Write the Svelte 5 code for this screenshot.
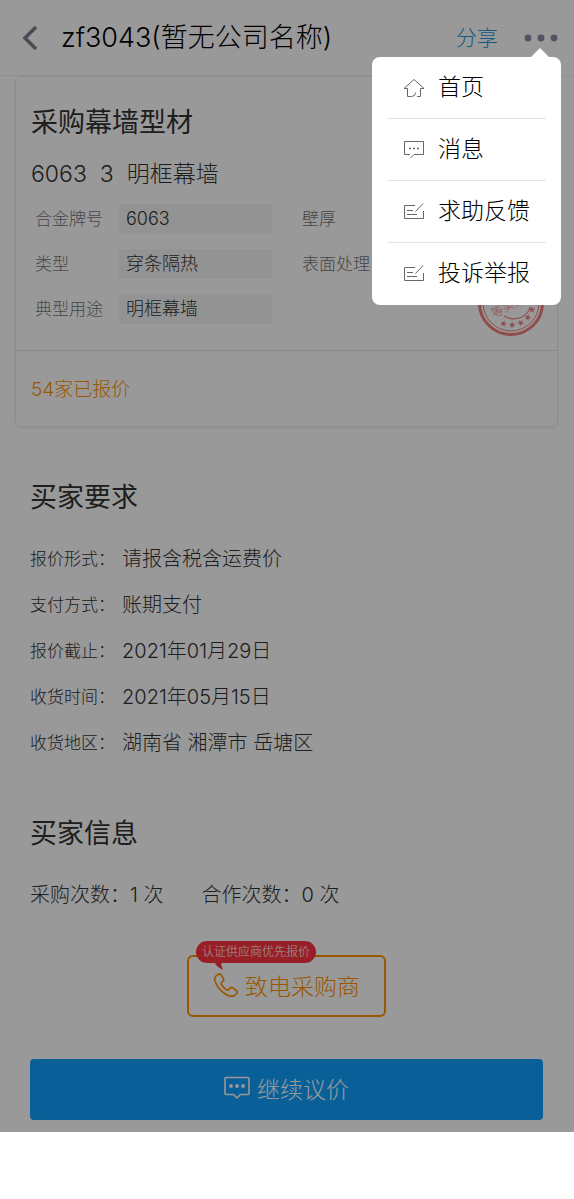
<script lang="ts">
  type Icon = 'home' | 'message' | 'edit';

  const menuItems: { label: string; icon: Icon }[] = [
    { label: '首页', icon: 'home' },
    { label: '消息', icon: 'message' },
    { label: '求助反馈', icon: 'edit' },
    { label: '投诉举报', icon: 'edit' }
  ];

  const specs = [
    { label: '合金牌号', value: '6063' },
    { label: '壁厚', value: '3' },
    { label: '类型', value: '穿条隔热' },
    { label: '表面处理', value: '' },
    { label: '典型用途', value: '明框幕墙' }
  ];

  const requirements = [
    { label: '报价形式：', value: '请报含税含运费价' },
    { label: '支付方式：', value: '账期支付' },
    { label: '报价截止：', value: '2021年01月29日' },
    { label: '收货时间：', value: '2021年05月15日' },
    { label: '收货地区：', value: '湖南省 湘潭市 岳塘区' }
  ];

  const stars = [-20, 3, 26, 49, 72];

  let menuOpen = $state(true);
</script>

<div class="page">
  <header class="topbar">
    <button class="icon-btn back" aria-label="返回">
      <svg viewBox="0 0 16 26" width="16" height="26" fill="none" stroke="#7e7e8c" stroke-width="3.6"><path d="M14 2 3 13l11 11" /></svg>
    </button>
    <h1>zf3043(暂无公司名称)</h1>
    <a class="share" href="#share">分享</a>
    <button class="icon-btn more" aria-label="更多" onclick={() => (menuOpen = !menuOpen)}>
      <svg viewBox="0 0 34 8" width="34" height="8" fill="#8d8aa6"><circle cx="4" cy="4" r="3.4" /><circle cx="17" cy="4" r="3.4" /><circle cx="30" cy="4" r="3.4" /></svg>
    </button>
  </header>

  <main>
    <section class="card">
      <div class="card-body">
        <h2>采购幕墙型材</h2>
        <div class="summary"><span>6063</span><span>3</span><span>明框幕墙</span></div>
        <dl class="specs">
          {#each specs as s}
            <div class="spec">
              <dt>{s.label}</dt>
              <dd>{s.value}</dd>
            </div>
          {/each}
        </dl>
        <svg class="stamp" viewBox="0 0 68 68" width="68" height="68" fill="none" stroke="#f07f7d">
          <circle cx="34" cy="34" r="31.5" stroke-width="3" />
          <circle cx="34" cy="34" r="28" stroke-width="1" />
          <path d="M27 47q9 5 18 1 7-4 8-10" stroke-width="1.2" />
          <text x="17" y="49" font-size="12" fill="#f07f7d" stroke="none" transform="rotate(-27 17 49)">等实力</text>
          {#each stars as a}
            <path transform="rotate({-a} 34 34) translate(34 56)" d="M0-3.400.9-1.100H3.300L1.400.4 2.100 2.900 0 1.500-2.100 2.900-1.400.4-3.300-1.100h2.400z" fill="#f07f7d" stroke="none" />
          {/each}
        </svg>
      </div>
      <a class="quotes" href="#quotes">54家已报价</a>
    </section>

    <section class="block">
      <h2>买家要求</h2>
      <dl class="reqs">
        {#each requirements as r}
          <div class="req">
            <dt>{r.label}</dt>
            <dd>{r.value}</dd>
          </div>
        {/each}
      </dl>
    </section>

    <section class="block buyer">
      <h2>买家信息</h2>
      <p class="counts"><span>采购次数：1 次</span><span>合作次数：0 次</span></p>
    </section>

    <div class="actions">
      <button class="call">
        <span class="tip">认证供应商优先报价
          <svg viewBox="0 0 9 9" width="9" height="9" fill="#ff3542"><path d="M0 0h7q0 5 2 9Q2 6 0 0z" /></svg>
        </span>
        <svg viewBox="0 0 26 26" width="26" height="26" fill="none" stroke="currentColor" stroke-width="1.600" stroke-linejoin="round"><path d="M5 2.500 2.800 4.200C1 6 1.600 9 3.200 12c2.400 4.500 5.800 8.200 10.300 10.700 3 1.700 6 2.200 8 .8l2.300-2c.9-.9.8-1.900-.1-2.700l-3.900-2.900c-1-.7-1.900-.6-2.700.2l-1.400 1.500c-.7.7-1.500.6-2.300.1-2-1.400-3.700-3.100-4.900-5.200-.5-.8-.4-1.500.3-2.200l1.300-1.300c.8-.8.8-1.600.2-2.500L8 2.800C7.200 1.700 6 1.600 5 2.500z" /></svg>
        致电采购商
      </button>
      <button class="bargain">
        <svg viewBox="0 0 26 24" width="26" height="24" fill="none" stroke="currentColor" stroke-width="1.600" stroke-linejoin="round"><path d="M2 1.500h22q1 0 1 1v15q0 1-1 1h-7.500L13 22l-3.500-3.500H2q-1 0-1-1v-15q0-1 1-1z" /><g fill="currentColor" stroke="none"><circle cx="7" cy="10" r="1.900" /><circle cx="13" cy="10" r="1.900" /><circle cx="19" cy="10" r="1.900" /></g></svg>
        继续议价
      </button>
    </div>
  </main>

  {#if menuOpen}
    <div class="mask"></div>
    <nav class="menu">
      {#each menuItems as m}
        <button class="menu-item">
          <svg viewBox="0 0 22 22" width="22" height="22" fill="none" stroke="#666" stroke-width="1">
            {#if m.icon === 'home'}
              <path d="M8.500 19.500h-4v-8h-3.500L11 2.500l10 9h-3.500v8H14M8.500 19.500q4 0 4-4" />
            {:else if m.icon === 'message'}
              <path d="M7 15.500H1.500v-13h19v13H11l-3.500 3.500" />
              <path d="M6 9.500h2m2 0h2m2 0h2" stroke-width="1.500" />
            {:else}
              <path d="M12 4.500H1.500v13h19V10M4 9.500h6M4 13.500h10M20 2.500l-7.500 8" />
            {/if}
          </svg>
          <span>{m.label}</span>
        </button>
      {/each}
    </nav>
  {/if}
</div>

<style>
  :global(body) { background: #fff; }
  .page {
    position: relative;
    background: #fff;
    font-family: Inter, "Noto Sans CJK SC", sans-serif;
    font-weight: 300;
    color: #333;
  }
  h1, h2, p, dl, dd { margin: 0; font-weight: 300; }
  button { font: inherit; cursor: pointer; }
  a { text-decoration: none; }
  svg { display: block; flex: none; }

  .topbar { display: flex; align-items: center; height: 75px; padding: 0 16px 0 22px; border-bottom: 1px solid #f0f0f0; }
  .topbar h1 { flex: 1; margin-left: 23px; font-size: 27px; line-height: 38px; color: #000; }
  .icon-btn { padding: 0; border: none; background: none; }
  .share { font-size: 21px; line-height: 30px; color: #2a93d8; margin-right: 26px; }

  .card { margin: 0 16px 0 15px; border: 1px solid #ededed; border-radius: 6px; box-shadow: 0 1px 2px #eee; }
  .card-body { position: relative; padding: 26px 15px; border-bottom: 1px solid #e4e4e4; }
  h2 { font-size: 27px; line-height: 40px; font-weight: 400; color: #333; }
  .summary { display: flex; gap: 13px; margin-top: 14px; font-size: 23px; line-height: 34px; }
  .specs { display: grid; grid-template-columns: 267px 1fr; row-gap: 15px; margin: 13px 0 0 4px; }
  .spec { display: flex; align-items: center; }
  .spec dt { width: 84px; font-size: 17px; line-height: 30px; color: #777; }
  .spec dd { width: 146px; height: 30px; padding-left: 7px; font-size: 18px; line-height: 30px; background: #f5f5f5; }
  .stamp { position: absolute; right: 12px; bottom: 13px; }
  .quotes { display: block; padding: 24px 15px 21px; font-size: 19px; line-height: 30px; color: #ff9100; }

  .block { padding: 51px 30px 0; }
  .reqs { display: grid; gap: 16px; margin-top: 26px; }
  .req { display: flex; align-items: center; }
  .req dt { width: 92px; font-size: 17px; line-height: 30px; }
  .req dd { font-size: 20px; line-height: 30px; }
  .buyer { padding-top: 56px; }
  .counts { display: flex; gap: 38px; margin-top: 26px; font-size: 20px; line-height: 30px; }

  .actions { display: flex; flex-direction: column; align-items: center; padding: 45px 31px 12px 30px; }
  .call { position: relative; display: flex; align-items: center; justify-content: center; gap: 6px; width: 199px; height: 62px; padding: 0 0 3px; border: 2px solid #ff9100; border-radius: 6px; background: none; color: #ff9100; font-size: 23px; }
  .tip { position: absolute; top: -16px; left: 7px; padding: 0 6px; border-radius: 11px; background: #ff3542; color: #fff; font-size: 12px; line-height: 22px; white-space: nowrap; }
  .tip svg { position: absolute; top: 20px; left: 18px; }
  .bargain { display: flex; align-items: center; justify-content: center; gap: 7px; width: 100%; height: 61px; margin-top: 42px; padding: 0 0 3px; border: none; border-radius: 4px; background: #0fa0ff; color: #fff; font-size: 23px; }

  .mask { position: absolute; inset: 0; background: rgba(0, 0, 0, 0.4); }
  .menu { position: absolute; top: 57px; right: 13px; width: 189px; box-sizing: border-box; padding: 0 15px; border-radius: 8px; background: #fff; }
  .menu::before { content: ''; position: absolute; top: -9px; right: 11px; border: 10px solid transparent; border-top: none; border-bottom-color: #fff; }
  .menu-item { display: flex; align-items: center; gap: 13px; width: 100%; height: 62px; padding: 0 0 0 16px; border: none; border-bottom: 1px solid #e3e3e3; background: none; color: #000; font-size: 23px; line-height: 30px; }
  .menu-item span { padding-bottom: 2px; }
  .menu-item:last-child { border-bottom: none; }
</style>
